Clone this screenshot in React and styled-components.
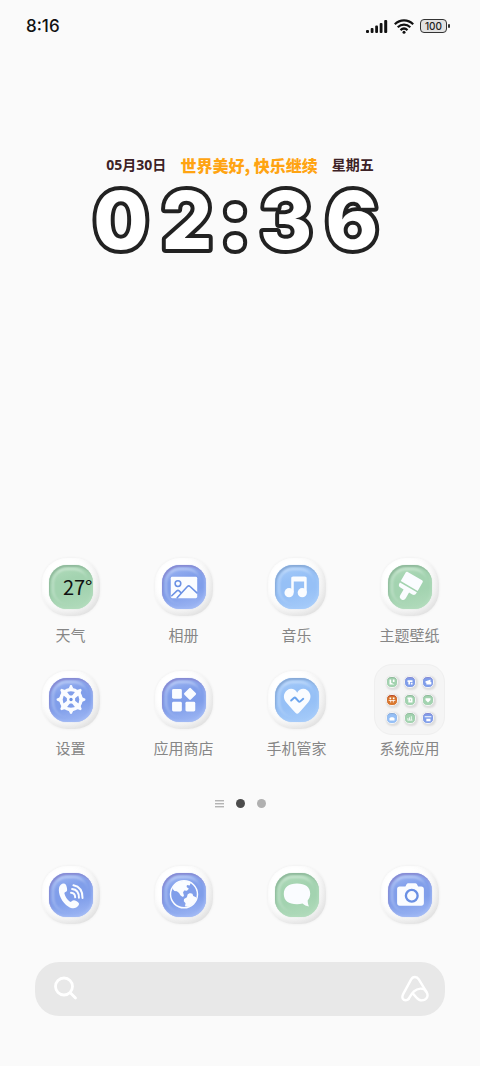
import styled, { createGlobalStyle } from "styled-components";

const GlobalStyle = createGlobalStyle`
  * {
    box-sizing: border-box;
  }
  body {
    margin: 0;
    background-color: #fafafa;
    font-family: "Noto Sans", "Noto Sans CJK SC", sans-serif;
  }
  button {
    padding: 0;
    border: none;
    background: none;
    font-family: inherit;
    cursor: pointer;
  }
`;

const Screen = styled.main`
  display: flex;
  flex-direction: column;
  min-height: 100vh;
  padding-bottom: 50px;
`;

const StatusBar = styled.header`
  display: flex;
  justify-content: space-between;
  align-items: center;
  height: 52px;
  padding: 0 30px 0 26px;
`;
const StatusTime = styled.time`
  font-family: Inter, sans-serif;
  font-size: 17px;
  font-weight: 500;
  color: #111;
`;
const StatusIcons = styled.div`
  display: flex;
  align-items: center;
  gap: 6px;
`;
const Battery = styled.div`
  display: flex;
  align-items: center;
  gap: 1px;
  &::after {
    content: "";
    width: 2px;
    height: 4px;
    border-radius: 1px;
    background-color: #333;
  }
`;
const BatteryBody = styled.span`
  width: 27px;
  height: 14px;
  border: 1px solid #333;
  border-radius: 4px;
  background-color: #e2e2e2;
  font-family: Inter, sans-serif;
  font-size: 10px;
  font-weight: 500;
  line-height: 12px;
  text-align: center;
  color: #222;
`;

const ClockWidget = styled.section`
  display: flex;
  flex-direction: column;
  align-items: center;
  padding-top: 102px;
`;
const DateRow = styled.div`
  display: flex;
  align-items: center;
  gap: 14px;
  height: 22px;
`;
const DateText = styled.span`
  font-size: 14px;
  font-weight: 700;
  line-height: 22px;
  color: #3d2226;
`;
const Greeting = styled.span`
  font-family: "Noto Sans CJK SC", sans-serif;
  font-size: 16px;
  font-weight: 900;
  line-height: 20px;
  color: #ffa412;
`;
const ClockFace = styled.svg`
  display: block;
  width: 300px;
  height: 96px;
  overflow: visible;
`;
const Digit = styled.text`
  font-family: ${(p) => (p.$colon ? '"Noto Sans"' : "Inter")}, sans-serif;
  font-size: 80px;
  font-weight: ${(p) => (p.$colon ? 900 : 800)};
  text-anchor: middle;
  fill: #fff;
  stroke: #222;
  stroke-width: 8px;
  stroke-linejoin: round;
  paint-order: stroke;
`;

const Spacer = styled.div`
  flex: 1;
`;

const AppGrid = styled.section`
  display: grid;
  grid-template-columns: repeat(4, 1fr);
  row-gap: 19px;
  padding: 0 14px;
`;
const AppButton = styled.button`
  display: flex;
  flex-direction: column;
  align-items: center;
  gap: 3px;
`;
const IconSlot = styled.span`
  display: flex;
  justify-content: center;
  align-items: center;
  height: ${(p) => p.$height}px;
`;
const AppLabel = styled.span`
  font-family: "Noto Sans CJK SC", sans-serif;
  font-size: 15px;
  font-weight: 400;
  line-height: 20px;
  color: #868686;
`;

const tones = {
  green: { base: "#a3d3b0", edge: "#8fb99b", light: "#b3dcbd", ink: "#7fbf90" },
  blue: { base: "#809eea", edge: "#8689d2", light: "#a3bbf5", ink: "#6a90e4" },
  sky: { base: "#96c0f6", edge: "#87a9d6", light: "#a8cdfa", ink: "#6ba4ee" },
  red: { base: "#d9772e", edge: "#b5482a", light: "#f0a040", ink: "#c03020" },
};

const Tile = styled.span`
  display: flex;
  justify-content: center;
  align-items: center;
  width: 58px;
  height: 58px;
  border-radius: 25px;
  background: linear-gradient(135deg, #ffffff 30%, #f3f3f3 85%);
  box-shadow:
    0 0 3px rgba(0, 0, 0, 0.06),
    inset -2px -3px 6px rgba(0, 0, 0, 0.08);
`;
const TileFace = styled.span`
  position: relative;
  width: 44px;
  height: 44px;
  border-radius: 18px;
  background: linear-gradient(
    165deg,
    ${(p) => tones[p.$tone].light},
    ${(p) => tones[p.$tone].base} 35%,
    ${(p) => tones[p.$tone].base} 60%,
    ${(p) => tones[p.$tone].light}
  );
  box-shadow:
    0 0 1px ${(p) => tones[p.$tone].light},
    inset 1px 2px 2px ${(p) => tones[p.$tone].edge},
    inset -1px -1px 3px ${(p) => tones[p.$tone].light};
  &::before {
    content: "";
    position: absolute;
    top: 3px;
    left: 3px;
    width: 34px;
    height: 34px;
    border-radius: 15px;
    border-top: 2px solid rgba(255, 255, 255, 0.4);
    border-left: 2px solid rgba(255, 255, 255, 0.3);
    filter: blur(1px);
  }
`;
const Glyph = styled.svg`
  position: relative;
  display: block;
  width: 44px;
  height: 44px;
  fill: #fafcff;
  stroke-linecap: round;
  stroke-linejoin: round;
`;
const Temperature = styled.span`
  position: absolute;
  right: 0;
  top: 8px;
  font-family: "Noto Sans CJK SC", sans-serif;
  font-size: 20px;
  line-height: 28px;
  color: #111;
`;

const Folder = styled.span`
  display: grid;
  grid-template-columns: repeat(3, 12px);
  place-content: center;
  gap: 6px;
  width: 71px;
  height: 71px;
  border: 1px solid #efefef;
  border-radius: 18px;
  background-color: #f5f5f5;
`;
const MiniTile = styled.span`
  height: 12px;
  border: 1px solid #f4f4f4;
  border-radius: 5px;
  background-color: ${(p) => tones[p.$tone].base};
  box-shadow:
    1px 1px 2px 1px rgba(0, 0, 0, 0.1),
    inset 0 1px 1px ${(p) => tones[p.$tone].edge};
  svg {
    display: block;
    width: 10px;
    height: 10px;
    fill: #fff;
  }
`;

const Pager = styled.nav`
  display: flex;
  justify-content: center;
  align-items: center;
  gap: 12px;
  height: 16px;
  margin-top: 37px;
`;
const PageDot = styled.button`
  width: 9px;
  height: 9px;
  border-radius: 50%;
  background-color: ${(p) => (p.$active ? "#4c4c4c" : "#b0b0b0")};
`;
const PageMenu = styled.button`
  display: flex;
  flex-direction: column;
  gap: 2px;
  width: 9px;
  span {
    height: 1px;
    background-color: #b4b4b4;
    box-shadow: 0 1px 0 #dcdcdc;
  }
`;

const Dock = styled.section`
  display: grid;
  grid-template-columns: repeat(4, 1fr);
  margin-top: 55px;
  padding: 0 14px;
`;

const SearchBar = styled.form`
  display: flex;
  align-items: center;
  height: 54px;
  margin: 38px 35px 0;
  padding: 0 16px 0 18px;
  border-radius: 24px;
  background-color: #e8e8e8;
`;
const SearchInput = styled.input`
  flex: 1;
  min-width: 0;
  height: 40px;
  border: none;
  outline: none;
  background: none;
  font-family: inherit;
  font-size: 16px;
  color: #555;
`;
const LineIcon = styled.svg`
  display: block;
  width: 28px;
  height: 28px;
  fill: none;
  stroke: #fff;
  stroke-linecap: round;
  stroke-linejoin: round;
`;

const digits = [
  { char: "0", x: 31 },
  { char: "2", x: 97 },
  { char: ":", x: 145 },
  { char: "3", x: 196 },
  { char: "6", x: 262 },
];

const glyphs = {
  gallery: (ink) => (
    <>
      <rect x="9" y="12" width="27" height="22" rx="1.5" />
      <g fill="none" stroke={ink} strokeWidth="1.6">
        <circle cx="16.3" cy="19" r="2.9" />
        <path d="M10 31.5l5.2-5c.8-.7 1.5-.7 2.3 0l1.8 1.8M15.5 33.5L26 22c.9-.9 1.8-.9 2.7 0l7 6.5" />
      </g>
    </>
  ),
  music: () => (
    <>
      <path d="M16.6 13.6c0-1.2.7-1.9 1.9-1.9h12c1.2 0 1.9.7 1.9 1.9V28h-2.6V17H19.2v11h-2.6z" />
      <circle cx="14.4" cy="28.3" r="4.7" />
      <circle cx="27.9" cy="28.3" r="4.7" />
    </>
  ),
  brush: () => (
    <g transform="translate(24 17.5) rotate(30)">
      <path d="M-8.5-7h17c.9 0 1.5.6 1.5 1.5V4.6H-10V-5.5c0-.9.6-1.5 1.5-1.5z" />
      <path d="M-10 6.2h20v1.3c0 2-1.2 3-3 3H3.2v6.7a3.2 3.2 0 0 1-6.4 0v-6.7H-7c-1.8 0-3-1-3-3z" />
    </g>
  ),
  wheel: (ink) => (
    <g transform="translate(22.5 22)">
      <circle r="10.2" fill="none" stroke="#fafcff" strokeWidth="3.4" />
      {[0, 45, 90, 135, 180, 225, 270, 315].map((a) => (
        <path key={a} transform={`rotate(${a})`} d="M-2.6-11L-1.4-13.4a1.4 1.4 0 0 1 2.8 0L2.6-11z" />
      ))}
      {[45, 135, 225, 315].map((a) => (
        <path key={a} transform={`rotate(${a})`} d="M-1.5 0h3l1.2 9.5h-5.4z" />
      ))}
      <rect x="-4.2" y="-4.2" width="8.4" height="8.4" rx="2" />
      <circle r="1.7" fill={ink} />
    </g>
  ),
  store: () => (
    <>
      <rect x="10.3" y="11.3" width="10" height="10" rx="1.5" />
      <rect x="10.3" y="24.3" width="10" height="10" rx="1.5" />
      <rect x="24" y="24.3" width="10" height="10" rx="1.5" />
      <rect x="24" y="11.5" width="9.4" height="9.4" rx="1.2" transform="rotate(45 28.7 16.2)" />
    </>
  ),
  heart: (ink) => (
    <>
      <path d="M22.7 15.2c2-4.3 7-5.2 10.3-2.7 4.2 3.2 4.2 8.3 1 12.2-2.7 3.4-6.5 7.2-9.5 10.8-1.2 1.3-2.4 1.3-3.6 0-3-3.6-6.8-7.4-9.5-10.8-3.2-3.9-3.2-9 1-12.2 3.3-2.5 8.3-1.6 10.3 2.7z" />
      <path d="M16.5 23l2.8-2.5c.7-.6 1.4-.5 2 .2l2.6 3c.6.7 1.3.8 2 .2l3-2.6" fill="none" stroke={ink} strokeWidth="2" />
    </>
  ),
  phone: () => (
    <>
      <path d="M10.3 15C9 21 13 30 20 34.5c4 2.5 8 2 10.3-1.5 1-1.6.3-2.5-2-4-2-1.3-3.3-1.5-4.5-.6-.9.7-1.5 1.5-2.3 1-3-2-5-5.2-5.7-8.4-.2-.9.7-1.2 1.6-1.7 1.2-.7 1.4-2 .9-4.3-.6-2.9-1.5-4.2-3.3-4.2-2.2 0-4.1 1.7-4.7 4.2z" />
      <g fill="none" stroke="#fafcff" strokeWidth="2">
        <path d="M22.5 20.3c2.6.2 4.2 2 4.3 4.6" />
        <path d="M23.6 16.4c4.4.4 7 3.8 7 8.9" />
        <path d="M25 12.6c6 1.2 9.4 6 9.3 13" />
      </g>
    </>
  ),
  globe: () => (
    <>
      <circle cx="22.5" cy="21.8" r="13.8" fill="none" stroke="#fafcff" strokeWidth="1.5" />
      <path d="M11.5 13.5c2-2.5 4.8-4.3 8.5-5 3.5-.6 6.5-.2 9.5 1.2l-1.2 3-2.8-.4-.3 2 2.3 1.7-2 2.2-2.8-.2-1.2 2 1 3-1 1.5c-2-.6-3.2-2.2-4-4l-2.3-1.8-2.5-.4-1.8-2z" />
      <path d="M22.5 26.5l3-1.8.6-2.5c1-1.8 3.6-2 5-.9l.9 2.2 2.8 1.2.2 2.3c-1.8 3.7-4.7 6.3-8.5 7.4l-3-.5.6-3-1.8-2z" />
    </>
  ),
  chat: () => (
    <path d="M22.5 10.8c8.5 0 13.5 3.7 13.5 10.2 0 3-1 5.4-2.6 7.2.1 2.4.5 4.2 1.3 6-2.6-.3-4.9-1.3-6.5-2.9-1.7.5-3.6.7-5.7.7C14 32 9 28.3 9 21.5c0-7 5-10.7 13.5-10.7z" />
  ),
  camera: (ink) => (
    <>
      <path d="M12 13.8h5.8l1.2-2.4c.4-.7.9-1 1.7-1h7.2c.8 0 1.3.3 1.7 1l1.2 2.4H34c1.7 0 2.7 1 2.7 2.7v14.3c0 1.7-1 2.7-2.7 2.7H12c-1.7 0-2.7-1-2.7-2.7V16.5c0-1.7 1-2.7 2.7-2.7z" />
      <circle cx="24.3" cy="23.3" r="6" fill="none" stroke={ink} strokeWidth="2.4" />
    </>
  ),
};

const apps = [
  { label: "天气", tone: "green", temperature: "27°" },
  { label: "相册", tone: "blue", icon: "gallery" },
  { label: "音乐", tone: "sky", icon: "music" },
  { label: "主题壁纸", tone: "green", icon: "brush" },
  { label: "设置", tone: "blue", icon: "wheel" },
  { label: "应用商店", tone: "blue", icon: "store" },
  { label: "手机管家", tone: "sky", icon: "heart" },
];

const dockApps = [
  { label: "电话", tone: "blue", icon: "phone" },
  { label: "浏览器", tone: "blue", icon: "globe" },
  { label: "短信", tone: "green", icon: "chat" },
  { label: "相机", tone: "blue", icon: "camera" },
];

const folderApps = [
  { tone: "green", path: "M3 3h2v4l4 2H3zM7 3h2v3H7z" },
  { tone: "blue", path: "M3 4h6v2H6v3H4V6H3zM7 7h2v2H7z" },
  { tone: "blue", path: "M3 5l4-1 2-1v3h1v3H4V7H3z" },
  { tone: "red", path: "M3 3h2v2H3zM7 3h2v2H7zM2 6h8v1H8v2H7V7H5v2H4V7H2z" },
  { tone: "green", path: "M3 3h5v1h1v5H4V5H3zM6 5v2h1V5z" },
  { tone: "green", path: "M3 4h6v2L6 9 3 6z" },
  { tone: "sky", path: "M3 6h1V5h4v1h1v3H3z" },
  { tone: "green", path: "M3 6h1v2h1V5h1v3h1V4h1v4h1v1H3z" },
  { tone: "blue", path: "M2 4h8v1H2zM4 7h5v3H4z" },
];

function AppTile({ tone, icon, temperature }) {
  return (
    <Tile>
      <TileFace $tone={tone}>
        {temperature && <Temperature>{temperature}</Temperature>}
        {icon && (
          <Glyph viewBox="0 0 45 45" aria-hidden="true">
            {glyphs[icon](tones[tone].ink)}
          </Glyph>
        )}
      </TileFace>
    </Tile>
  );
}

function App() {
  return (
    <>
      <GlobalStyle />
      <Screen>
        <StatusBar>
          <StatusTime>8:16</StatusTime>
          <StatusIcons>
            <svg width="22" height="14" viewBox="0 0 22 14" fill="#111" aria-hidden="true">
              <rect x="0" y="11" width="3" height="3" rx="1" />
              <rect x="4.7" y="9" width="2.8" height="5" rx="1" />
              <rect x="9.2" y="6.5" width="2.8" height="7.5" rx="1" />
              <rect x="13.7" y="4" width="2.8" height="10" rx="1" />
              <rect x="18.2" y="1" width="3" height="13" rx="1" />
            </svg>
            <svg width="20" height="15" viewBox="0 0 20 15" fill="none" stroke="#111" strokeWidth="2.2" aria-hidden="true">
              <path d="M.8 5.2c5.3-5.1 13.1-5.1 18.4 0M3.7 8.2c3.7-3.5 8.9-3.5 12.6 0M6.5 11.1c2.1-1.9 4.9-1.9 7 0" />
              <circle cx="10" cy="13.2" r="1.5" fill="#111" stroke="none" />
            </svg>
            <Battery>
              <BatteryBody>100</BatteryBody>
            </Battery>
          </StatusIcons>
        </StatusBar>

        <ClockWidget>
          <DateRow>
            <DateText>05月30日</DateText>
            <Greeting>世界美好, 快乐继续</Greeting>
            <DateText>星期五</DateText>
          </DateRow>
          <ClockFace viewBox="0 0 300 96" role="img" aria-label="02:36">
            {digits.map((d) => (
              <Digit key={d.char} x={d.x} y="73" $colon={d.char === ":"}>
                {d.char}
              </Digit>
            ))}
          </ClockFace>
        </ClockWidget>

        <Spacer />

        <AppGrid>
          {apps.map((app) => (
            <AppButton key={app.label} type="button">
              <IconSlot $height={71}>
                <AppTile {...app} />
              </IconSlot>
              <AppLabel>{app.label}</AppLabel>
            </AppButton>
          ))}
          <AppButton type="button">
            <IconSlot $height={71}>
              <Folder>
                {folderApps.map((item, i) => (
                  <MiniTile key={i} $tone={item.tone}>
                    <svg viewBox="0 0 12 12" aria-hidden="true">
                      <path d={item.path} />
                    </svg>
                  </MiniTile>
                ))}
              </Folder>
            </IconSlot>
            <AppLabel>系统应用</AppLabel>
          </AppButton>
        </AppGrid>

        <Pager aria-label="页面">
          <PageMenu type="button" aria-label="菜单">
            <span />
            <span />
            <span />
          </PageMenu>
          <PageDot type="button" aria-label="第 1 页" $active />
          <PageDot type="button" aria-label="第 2 页" />
        </Pager>

        <Dock>
          {dockApps.map((app) => (
            <AppButton key={app.label} type="button" aria-label={app.label}>
              <IconSlot $height={58}>
                <AppTile {...app} />
              </IconSlot>
            </AppButton>
          ))}
        </Dock>

        <SearchBar onSubmit={(e) => e.preventDefault()}>
          <button type="submit" aria-label="搜索">
            <LineIcon viewBox="0 0 28 28" strokeWidth="2.8">
              <circle cx="11" cy="11.5" r="8.5" />
              <path d="M17.5 18l5 5" />
            </LineIcon>
          </button>
          <SearchInput type="search" aria-label="搜索" />
          <button type="button" aria-label="语音助手">
            <LineIcon viewBox="0 0 28 28" strokeWidth="2.4">
              <path d="M7.5 24c-1.3 1.7-4.5 1.7-5.6-.1-.9-1.6-.6-3.3.4-5.1L10 4.6c1.8-3.5 5.8-3.5 7.8-.3l7.9 13c2.3 4.2-.5 8.1-4.9 8.1-2.4 0-4.2-1.4-5.4-2.9L12 18.6" />
              <path d="M7.5 24c2.8-4 5-10 12-10.4 2.4-.1 4.5 1 5.7 2.9" />
            </LineIcon>
          </button>
        </SearchBar>
      </Screen>
    </>
  );
}

export default App;
